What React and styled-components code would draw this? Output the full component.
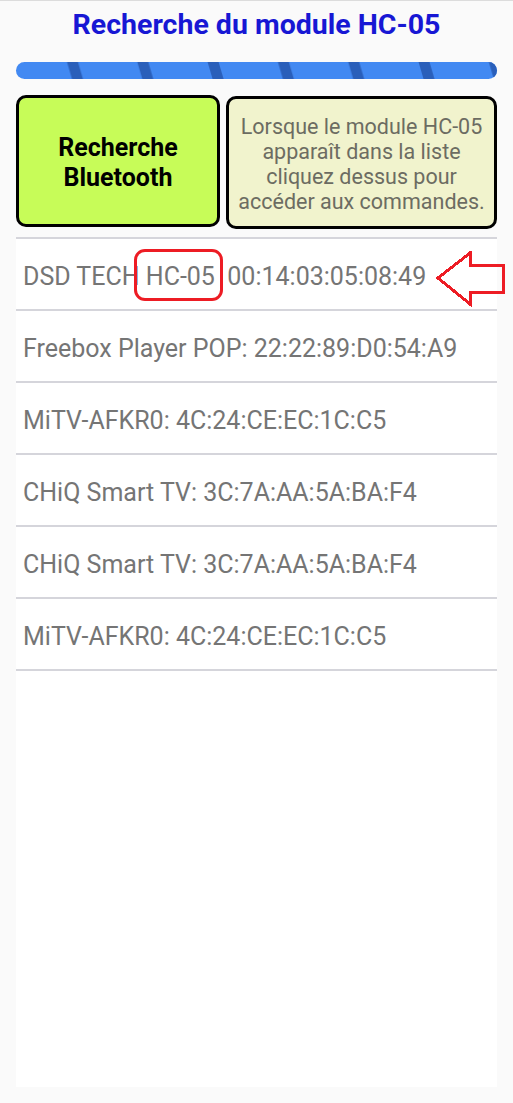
import React from "react";
import styled, { createGlobalStyle } from "styled-components";

const GlobalStyle = createGlobalStyle`
  html, body {
    margin: 0;
    padding: 0;
    background: #fafafa;
    font-family: Roboto, "Liberation Sans", sans-serif;
  }
`;

const Screen = styled.div`
  position: relative;
  width: 513px;
  height: 1103px;
  border-top: 1px solid #dcdcdc;
  box-sizing: border-box;
  display: flex;
  flex-direction: column;
  padding: 0 16px 16px;
`;

const Title = styled.h1`
  margin: 0;
  padding-top: 1px;
  height: 45px;
  line-height: 46px;
  text-align: center;
  font-size: 28.5px;
  font-weight: 700;
  color: #1717d4;
`;

const ProgressTrack = styled.div`
  margin-top: 15px;
  height: 17px;
  border-radius: 9px;
  overflow: hidden;
  background: #4289f2;

  svg {
    display: block;
  }
`;

const ButtonRow = styled.div`
  display: flex;
  gap: 6px;
  margin-top: 16px;
  height: 134px;
`;

const SearchButton = styled.button`
  width: 204px;
  height: 132px;
  box-sizing: border-box;
  border: 3px solid #000;
  border-radius: 10px;
  background: #c7fc58;
  font-family: Roboto, "Liberation Sans", sans-serif;
  font-size: 25px;
  font-weight: 700;
  line-height: 30px;
  color: #000;
  padding: 4px 6px 0;
`;

const HintBox = styled.div`
  flex: 1;
  box-sizing: border-box;
  margin-top: 1px;
  border: 3px solid #000;
  border-radius: 10px;
  background: #f1f3cd;
  display: flex;
  align-items: center;
  justify-content: center;
  text-align: center;
  font-size: 21.5px;
  line-height: 25px;
  color: #6c6c62;
  padding: 2px 2px 0;
`;

const DeviceList = styled.ul`
  list-style: none;
  margin: 8px 0 0;
  padding: 0;
  flex: 1;
  background: #fff;
  border-top: 2px solid #d5d5db;
`;

const DeviceRow = styled.li`
  position: relative;
  height: 72px;
  box-sizing: border-box;
  display: flex;
  align-items: center;
  padding: 4px 0 0 7px;
  border-bottom: 2px solid #d5d5db;
  font-size: 25px;
  color: #757575;
  white-space: pre;
`;

const Highlight = styled.span`
  position: absolute;
  left: 118px;
  top: 10px;
  width: 89px;
  height: 52px;
  box-sizing: border-box;
  border: 3px solid #ed1c24;
  border-radius: 11px;
`;

const Arrow = styled.svg`
  position: absolute;
  left: 419px;
  top: 12px;
`;

const devices = [
  "DSD TECH HC-05  00:14:03:05:08:49",
  "Freebox Player POP: 22:22:89:D0:54:A9",
  "MiTV-AFKR0: 4C:24:CE:EC:1C:C5",
  "CHiQ Smart TV: 3C:7A:AA:5A:BA:F4",
  "CHiQ Smart TV: 3C:7A:AA:5A:BA:F4",
  "MiTV-AFKR0: 4C:24:CE:EC:1C:C5",
];

const StripedBar = () => (
  <svg width="481" height="17" viewBox="0 0 481 17">
    <defs>
      <pattern id="stripes" width="70.3" height="17" patternUnits="userSpaceOnUse">
        <polygon points="51,0 62,0 67,17 56,17" fill="#2a5fba" />
      </pattern>
    </defs>
    <rect width="481" height="17" fill="url(#stripes)" />
  </svg>
);

const PointerArrow = () => (
  <Arrow width="72" height="56" viewBox="0 0 72 56" shapeRendering="crispEdges">
    <polygon
      points="3,27 35,2 35,14 68,14 68,41 35,41 35,53"
      fill="none"
      stroke="#ed1c24"
      strokeWidth="3"
      strokeLinejoin="miter"
    />
  </Arrow>
);

const App = () => {
  return (
    <>
      <GlobalStyle />
      <Screen>
        <Title>Recherche du module HC-05</Title>
        <ProgressTrack>
          <StripedBar />
        </ProgressTrack>
        <ButtonRow>
          <SearchButton>
            Recherche
            <br />
            Bluetooth
          </SearchButton>
          <HintBox>
            Lorsque le module HC-05 apparaît dans la liste cliquez dessus pour
            accéder aux commandes.
          </HintBox>
        </ButtonRow>
        <DeviceList>
          {devices.map((name, i) => (
            <DeviceRow key={i}>
              {name}
              {i === 0 && (
                <>
                  <Highlight />
                  <PointerArrow />
                </>
              )}
            </DeviceRow>
          ))}
        </DeviceList>
      </Screen>
    </>
  );
};

export default App;
